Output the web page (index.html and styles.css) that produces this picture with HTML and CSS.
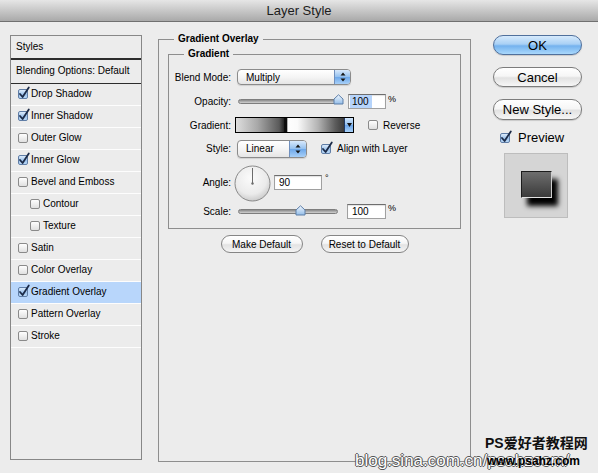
FILE: index.html
```html
<!DOCTYPE html>
<html>
<head>
<meta charset="utf-8">
<title>Layer Style</title>
<link rel="stylesheet" href="styles.css">
</head>
<body>
<svg class="defs" width="0" height="0" aria-hidden="true">
  <defs>
    <linearGradient id="tg" x1="0" y1="0" x2="0" y2="1">
      <stop offset="0" stop-color="#f2f8fe"/>
      <stop offset="1" stop-color="#93bde9"/>
    </linearGradient>
    <radialGradient id="dg" cx="45%" cy="35%" r="70%">
      <stop offset="0" stop-color="#fbfbfb"/>
      <stop offset="0.65" stop-color="#ebebeb"/>
      <stop offset="1" stop-color="#c4c4c4"/>
    </radialGradient>
  </defs>
</svg>

<div class="titlebar">Layer Style</div>

<div class="main">
  <div class="styles-panel">
    <div class="srow head">Styles</div>
    <div class="srow blend">Blending Options: Default</div>
    <div class="srow"><span class="cb on"><svg class="tick" width="13" height="13" viewBox="0 0 13 13"><path d="M2 8 L4.6 11 L10.8 1.5"/></svg></span>Drop Shadow</div>
    <div class="srow"><span class="cb on"><svg class="tick" width="13" height="13" viewBox="0 0 13 13"><path d="M2 8 L4.6 11 L10.8 1.5"/></svg></span>Inner Shadow</div>
    <div class="srow"><span class="cb"></span>Outer Glow</div>
    <div class="srow"><span class="cb on"><svg class="tick" width="13" height="13" viewBox="0 0 13 13"><path d="M2 8 L4.6 11 L10.8 1.5"/></svg></span>Inner Glow</div>
    <div class="srow"><span class="cb"></span>Bevel and Emboss</div>
    <div class="srow sub"><span class="cb"></span>Contour</div>
    <div class="srow sub"><span class="cb"></span>Texture</div>
    <div class="srow"><span class="cb"></span>Satin</div>
    <div class="srow"><span class="cb"></span>Color Overlay</div>
    <div class="srow active"><span class="cb on"><svg class="tick" width="13" height="13" viewBox="0 0 13 13"><path d="M2 8 L4.6 11 L10.8 1.5"/></svg></span>Gradient Overlay</div>
    <div class="srow"><span class="cb"></span>Pattern Overlay</div>
    <div class="srow"><span class="cb"></span>Stroke</div>
  </div>

  <fieldset class="outer">
    <legend>Gradient Overlay</legend>
    <fieldset class="inner">
      <legend>Gradient</legend>

      <div class="frow r-blend">
        <label>Blend Mode:</label>
        <div class="select blend-sel">
          <span class="val">Multiply</span>
          <span class="stepper"><svg width="14" height="14" viewBox="0 0 14 14"><path d="M4.5 5.5 L7 2.5 L9.5 5.5Z M4.5 8.5 L7 11.5 L9.5 8.5Z"/></svg></span>
        </div>
      </div>

      <div class="frow r-opacity">
        <label>Opacity:</label>
        <div class="slider">
          <span class="track"></span>
          <svg class="thumb" style="left:95px" width="11" height="11" viewBox="0 0 11 11"><path d="M1 5 L5.5 0.8 L10 5 L10 10 L1 10Z"/></svg>
        </div>
        <div class="field op-field"><span class="sel">100</span></div>
        <span class="unit">%</span>
      </div>

      <div class="frow r-grad">
        <label>Gradient:</label>
        <div class="gradbar">
          <span class="gfill"></span>
          <span class="gdrop"><svg width="5" height="4" viewBox="0 0 5 4"><path d="M0 0 L5 0 L2.5 4Z"/></svg></span>
        </div>
        <span class="cb rev"></span>
        <span class="ctext">Reverse</span>
      </div>

      <div class="frow r-style">
        <label>Style:</label>
        <div class="select style-sel">
          <span class="val">Linear</span>
          <span class="stepper"><svg width="14" height="16" viewBox="0 0 14 16"><path d="M4.5 6.5 L7 3.5 L9.5 6.5Z M4.5 9.5 L7 12.5 L9.5 9.5Z"/></svg></span>
        </div>
        <span class="cb on align"><svg class="tick" width="13" height="13" viewBox="0 0 13 13"><path d="M2 8 L4.6 11 L10.8 1.5"/></svg></span>
        <span class="ctext align-t">Align with Layer</span>
      </div>

      <div class="frow r-angle">
        <label>Angle:</label>
        <svg class="dial" width="37" height="37" viewBox="0 0 37 37">
          <circle cx="18.5" cy="18.5" r="17.5" fill="url(#dg)" stroke="#8a8a8a"/>
          <line x1="18.5" y1="18.5" x2="18.5" y2="3" stroke="#6c6c6c" stroke-width="1"/>
          <circle cx="18.5" cy="18.5" r="1.2" fill="#6c6c6c"/>
        </svg>
        <div class="field ang-field">90</div>
        <span class="deg">°</span>
      </div>

      <div class="frow r-scale">
        <label>Scale:</label>
        <div class="slider">
          <span class="track"></span>
          <svg class="thumb" style="left:57px" width="11" height="11" viewBox="0 0 11 11"><path d="M1 5 L5.5 0.8 L10 5 L10 10 L1 10Z"/></svg>
        </div>
        <div class="field sc-field">100</div>
        <span class="unit">%</span>
      </div>
    </fieldset>

    <div class="defaults">
      <button class="pill mk">Make Default</button>
      <button class="pill rs">Reset to Default</button>
    </div>
  </fieldset>

  <div class="side">
    <button class="btn ok">OK</button>
    <button class="btn">Cancel</button>
    <button class="btn ns">New Style...</button>
    <div class="preview-row">
      <span class="cb on"><svg class="tick" width="13" height="13" viewBox="0 0 13 13"><path d="M2 8 L4.6 11 L10.8 1.5"/></svg></span>
      <span class="ptext">Preview</span>
    </div>
    <div class="preview-box"><div class="swatch"></div></div>
  </div>
</div>

<div class="wm-cn">PS爱好者教程网</div>
<div class="wm-blog">blog.sina.com.cn/psahzcom/</div>
<div class="wm-www">www.psahz.com</div>
</body>
</html>
```
FILE: styles.css
```css
* { box-sizing: border-box; }
html, body { margin: 0; padding: 0; }
body {
  width: 598px;
  height: 473px;
  position: relative;
  overflow: hidden;
  background: #ececec;
  font-family: "Liberation Sans", Arial, sans-serif;
  font-size: 10px;
  color: #000;
}
.defs { position: absolute; width: 0; height: 0; }

.titlebar {
  height: 22px;
  line-height: 22px;
  text-align: center;
  font-size: 13px;
  color: #1c1c1c;
  background: linear-gradient(#e6e6e6, #a9a9a9);
  border-bottom: 1px solid #707070;
}

.main {
  display: flex;
  align-items: flex-start;
  padding: 11px 0 0 10px;
}

/* ---------- styles list ---------- */
.styles-panel {
  flex: none;
  margin-top: 2px;
  width: 132px;
  height: 425px;
  border: 1px solid #878787;
  background: #ececec;
}
.srow {
  height: 22px;
  display: flex;
  align-items: center;
  padding: 0 0 2px 7px;
  border-bottom: 1px solid #fdfdfd;
  white-space: nowrap;
}
.srow.head {
  height: 24px;
  padding-left: 5px;
  border-bottom: 2px solid #2c2c2c;
}
.srow.blend {
  height: 24px;
  padding-left: 5px;
  border-bottom: 1px solid #2c2c2c;
}
.srow.sub { padding-left: 19px; }
.srow.active { background: #b8d6fb; }

.cb {
  position: relative;
  flex: none;
  display: inline-block;
  width: 10px;
  height: 10px;
  border: 1px solid #8a8a8a;
  border-radius: 2px;
  background: linear-gradient(#fefefe, #e0e0e0);
  margin-right: 3px;
}
.cb.on {
  background: linear-gradient(#dcebfb, #9dc3ec 55%, #b9d8f7);
  border-color: #5f7da6;
}
.tick {
  position: absolute;
  left: -1px;
  top: -4px;
  fill: none;
  stroke: #1c2b48;
  stroke-width: 1.8;
  stroke-linecap: round;
  stroke-linejoin: round;
  overflow: visible;
}

/* ---------- fieldsets ---------- */
fieldset { margin: 0; min-width: 0; }
legend {
  font-weight: bold;
  font-size: 10px;
  line-height: 12px;
  padding: 0 4px;
}
.outer {
  flex: none;
  margin-left: 16px;
  width: 313px;
  height: 429px;
  border: 1px solid #8e8e8e;
  padding: 0 9px;
}
.outer > legend { margin-left: 6px; }
.inner {
  margin-top: 3px;
  border: 1px solid #8e8e8e;
  padding: 5px 0 10px 0;
}
.inner > legend { margin-left: 15px; }

.frow {
  display: flex;
  align-items: center;
  white-space: nowrap;
}
.frow > label {
  flex: none;
  width: 62px;
  margin-right: 6px;
  text-align: right;
}
.r-blend { height: 24px; }
.r-opacity { height: 24px; }
.r-grad { height: 24px; }
.r-style { height: 23px; }
.r-angle { height: 45px; }
.r-scale { height: 13px; }

.select {
  flex: none;
  display: flex;
  height: 16px;
  border: 1px solid #8b8b8b;
  border-radius: 4px;
  background: linear-gradient(#ffffff, #f5f5f5 50%, #e5e5e5);
  box-shadow: 0 1px 1px rgba(0, 0, 0, 0.12);
  overflow: hidden;
}
.select .val {
  flex: 1;
  display: flex;
  align-items: center;
  padding-left: 8px;
}
.stepper {
  width: 16px;
  display: flex;
  align-items: center;
  justify-content: center;
  border-left: 1px solid #6f8fbd;
  background: linear-gradient(#d8e9fc, #95c1ef 48%, #6ea8ea 52%, #a8d0f8);
  fill: #151515;
}
.blend-sel { width: 114px; }
.style-sel { width: 70px; height: 18px; }
.style-sel .stepper { width: 17px; }

.slider {
  position: relative;
  flex: none;
  margin-left: 1px;
  width: 104px;
  height: 12px;
  display: flex;
  align-items: center;
}
.track {
  width: 100px;
  height: 5px;
  border-radius: 3px;
  border: 1px solid #7e7e7e;
  background: linear-gradient(#8a8a8a, #d2d2d2);
}
.thumb {
  position: absolute;
  top: -1px;
  fill: url(#tg);
  stroke: #5d7ea8;
  stroke-width: 1;
}

.field {
  flex: none;
  display: flex;
  align-items: center;
  height: 15px;
  border: 1px solid #a0a0a0;
  border-top-color: #6e6e6e;
  background: #fff;
  box-shadow: inset 0 1px 1px rgba(0, 0, 0, 0.12);
  padding-left: 3px;
}
.op-field { margin-left: 6px; width: 38px; padding-left: 1px; }
.op-field .sel {
  background: #b6d4fb;
  line-height: 13px;
  padding: 0 3px 0 2px;
}
.sc-field { margin-left: 5px; width: 39px; padding-left: 4px; }
.ang-field { margin-left: 3px; width: 48px; padding-left: 4px; }
.unit { margin-left: 2px; align-self: flex-start; margin-top: 5px; font-size: 9px; }
.r-scale .unit { margin-top: -2px; }
.deg { margin-left: 3px; align-self: flex-start; margin-top: 13px; font-size: 9px; }

.gradbar {
  flex: none;
  display: flex;
  margin-left: -2px;
  width: 119px;
  height: 16px;
  border: 1px solid #000;
}
.gfill {
  flex: 1;
  background: linear-gradient(to right, #dedede 0%, #a8a8a8 20%, #5a5a5a 40%, #2a2a2a 44%, #0d0d0d 45%, #0d0d0d 47%, #fefefe 48%, #fafafa 57%, #b3b3b3 76%, #5c5c5c 92%, #3a3a3a 100%);
}
.gdrop {
  width: 9px;
  display: flex;
  align-items: center;
  justify-content: center;
  border-left: 1px solid #203a66;
  background: linear-gradient(#d2e6fb, #8fbdee 50%, #6aa5ea 52%, #a9d1f8);
  fill: #111;
}
.cb.rev { margin-left: 14px; margin-right: 5px; }
.cb.align { margin-left: 14px; margin-right: 6px; }

.dial { flex: none; margin-left: -3px; margin-top: 2px; }

.defaults {
  display: flex;
  justify-content: center;
  gap: 18px;
  margin-top: 6px;
}
.pill {
  height: 18px;
  padding: 0;
  border: 1px solid #858585;
  border-radius: 9px;
  background: linear-gradient(#ffffff, #f6f6f6 45%, #e3e3e3 55%, #f4f4f4);
  font-family: "Liberation Sans", Arial, sans-serif;
  font-size: 10px;
  color: #000;
}
.mk { width: 82px; }
.rs { width: 88px; }

/* ---------- side column ---------- */
.side {
  flex: none;
  margin-left: 22px;
  margin-top: 2px;
  width: 89px;
  display: flex;
  flex-direction: column;
}
.btn {
  height: 20px;
  padding: 0;
  margin-bottom: 12px;
  border: 1px solid #7c7c7c;
  border-radius: 10px;
  background: linear-gradient(#ffffff, #f6f6f6 45%, #e2e2e2 55%, #f6f6f6);
  font-family: "Liberation Sans", Arial, sans-serif;
  font-size: 13px;
  color: #000;
  box-shadow: 0 1px 1px rgba(0, 0, 0, 0.15);
}
.btn.ok {
  border-color: #50709c;
  background: linear-gradient(#d6eafc, #a9d0f5 45%, #74b2ee 55%, #a9d8fc);
}
.btn.ns { height: 21px; }
.preview-row {
  display: flex;
  align-items: center;
  height: 11px;
  padding-left: 7px;
}
.preview-row .cb { margin-right: 8px; }
.ptext { font-size: 13px; line-height: 11px; }
.preview-box {
  margin: 10px 0 0 11px;
  width: 64px;
  height: 65px;
  border: 1px solid #bdbdbd;
  background: #d5d5d5;
  padding: 17px 0 0 16px;
}
.swatch {
  width: 31px;
  height: 27px;
  border: 1px solid #1c1c1c;
  border-bottom-color: #e2e2e2;
  border-right-color: #cfcfcf;
  background: linear-gradient(#6e6e6e, #3a3a3a);
  box-shadow: 6px 8px 5px #000;
}

/* ---------- watermark overlay ---------- */
.wm-cn {
  position: absolute;
  left: 485px;
  top: 436px;
  font-family: "Liberation Sans", "Noto Sans CJK SC", sans-serif;
  font-weight: bold;
  font-size: 14px;
  line-height: 14px;
  color: #111;
}
.wm-blog {
  position: absolute;
  left: 355px;
  top: 453px;
  font-family: "Liberation Sans", Arial, sans-serif;
  font-size: 17px;
  line-height: 16px;
  color: #fff;
  text-shadow: 1px 0 0 #555, -1px 0 0 #555, 0 1px 0 #555, 0 -1px 0 #555;
  white-space: nowrap;
}
.wm-www {
  position: absolute;
  left: 487px;
  top: 455px;
  font-family: "Liberation Sans", Arial, sans-serif;
  font-weight: bold;
  font-size: 12px;
  line-height: 13px;
  color: #000;
}
```
